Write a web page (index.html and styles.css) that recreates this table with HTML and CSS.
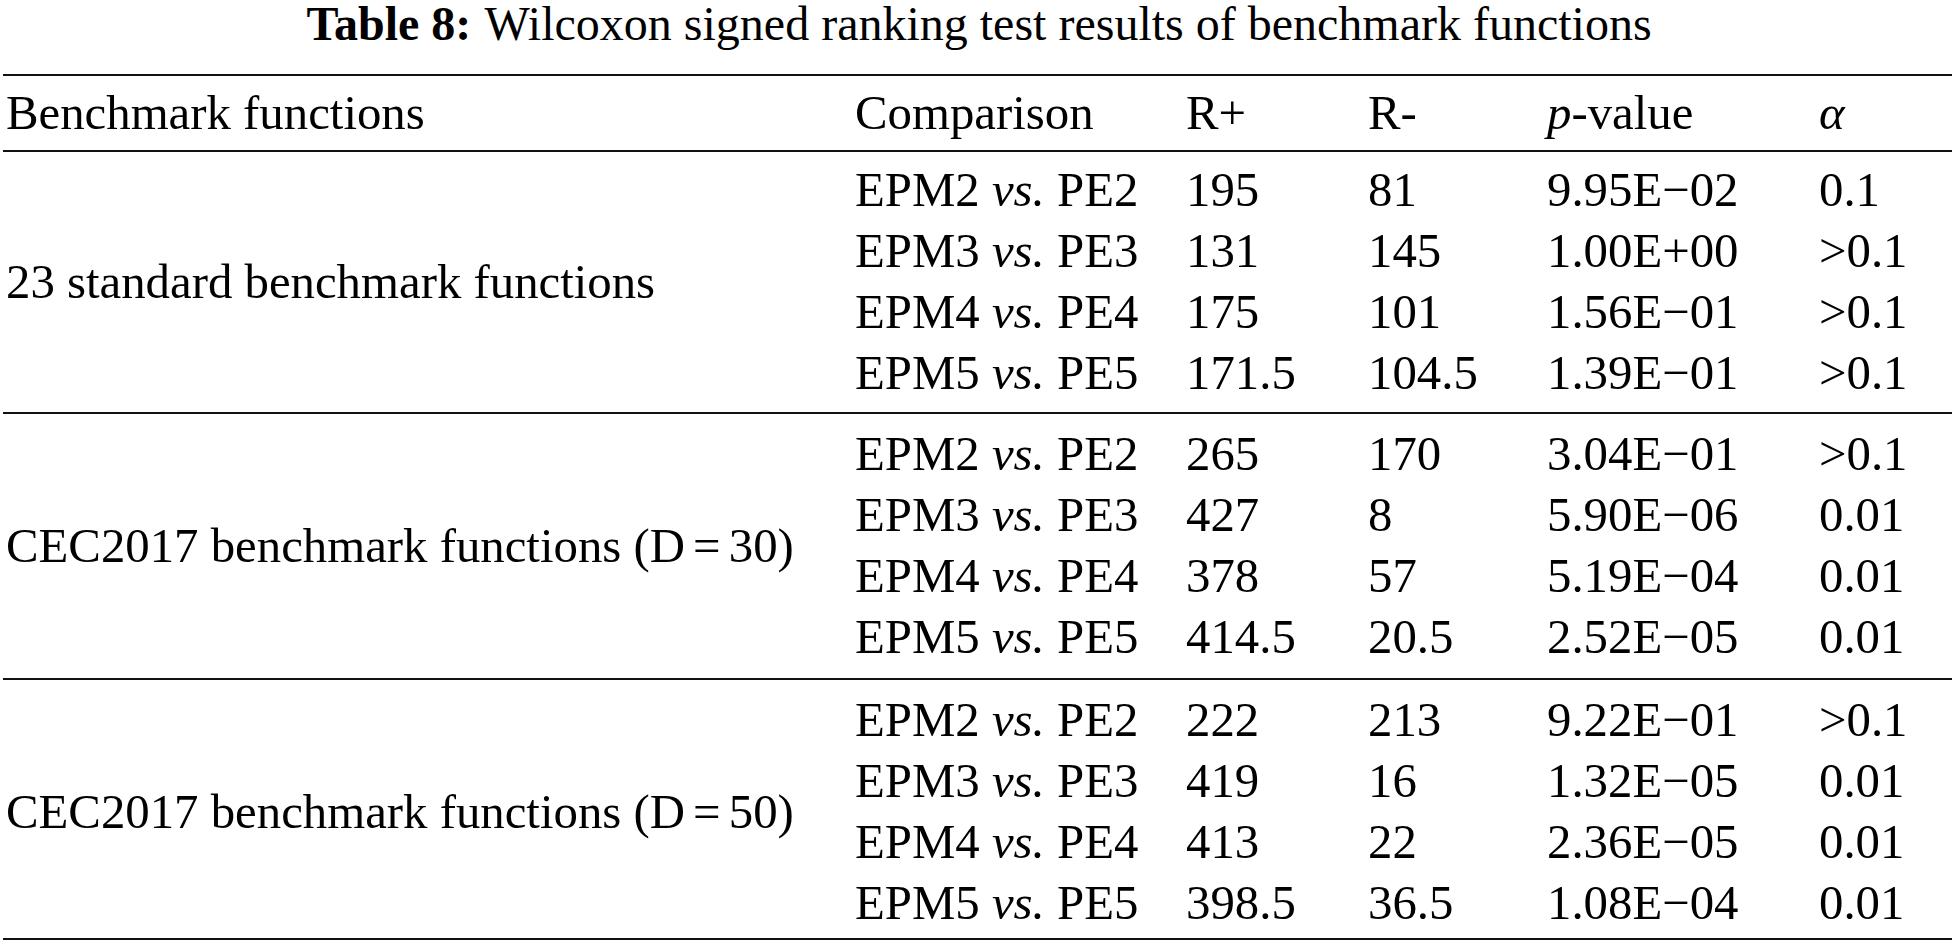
FILE: index.html
```html
<!DOCTYPE html>
<html lang="en">
<head>
<meta charset="utf-8">
<title>Table 8</title>
<link rel="stylesheet" href="styles.css">
</head>
<body>
<div class="page">
  <div class="title"><b>Table 8:</b> Wilcoxon signed ranking test results of benchmark functions</div>
  <table class="results">
    <colgroup>
      <col class="c-bench">
      <col class="c-comp">
      <col class="c-rplus">
      <col class="c-rminus">
      <col class="c-p">
      <col class="c-alpha">
    </colgroup>
    <thead>
      <tr>
        <th>Benchmark functions</th>
        <th>Comparison</th>
        <th>R+</th>
        <th>R-</th>
        <th><i>p</i>-value</th>
        <th><i>α</i></th>
      </tr>
    </thead>
    <tbody class="g1">
      <tr class="first">
        <td rowspan="4" class="group">23 standard benchmark functions</td>
        <td>EPM2 <i>vs.</i> PE2</td><td>195</td><td>81</td><td>9.95E−02</td><td>0.1</td>
      </tr>
      <tr><td>EPM3 <i>vs.</i> PE3</td><td>131</td><td>145</td><td>1.00E+00</td><td>&gt;0.1</td></tr>
      <tr><td>EPM4 <i>vs.</i> PE4</td><td>175</td><td>101</td><td>1.56E−01</td><td>&gt;0.1</td></tr>
      <tr class="last"><td>EPM5 <i>vs.</i> PE5</td><td>171.5</td><td>104.5</td><td>1.39E−01</td><td>&gt;0.1</td></tr>
    </tbody>
    <tbody class="g2">
      <tr class="first">
        <td rowspan="4" class="group">CEC2017 benchmark functions (D&#8198;=&#8198;30)</td>
        <td>EPM2 <i>vs.</i> PE2</td><td>265</td><td>170</td><td>3.04E−01</td><td>&gt;0.1</td>
      </tr>
      <tr><td>EPM3 <i>vs.</i> PE3</td><td>427</td><td>8</td><td>5.90E−06</td><td>0.01</td></tr>
      <tr><td>EPM4 <i>vs.</i> PE4</td><td>378</td><td>57</td><td>5.19E−04</td><td>0.01</td></tr>
      <tr class="last"><td>EPM5 <i>vs.</i> PE5</td><td>414.5</td><td>20.5</td><td>2.52E−05</td><td>0.01</td></tr>
    </tbody>
    <tbody class="g3">
      <tr class="first">
        <td rowspan="4" class="group">CEC2017 benchmark functions (D&#8198;=&#8198;50)</td>
        <td>EPM2 <i>vs.</i> PE2</td><td>222</td><td>213</td><td>9.22E−01</td><td>&gt;0.1</td>
      </tr>
      <tr><td>EPM3 <i>vs.</i> PE3</td><td>419</td><td>16</td><td>1.32E−05</td><td>0.01</td></tr>
      <tr><td>EPM4 <i>vs.</i> PE4</td><td>413</td><td>22</td><td>2.36E−05</td><td>0.01</td></tr>
      <tr class="last"><td>EPM5 <i>vs.</i> PE5</td><td>398.5</td><td>36.5</td><td>1.08E−04</td><td>0.01</td></tr>
    </tbody>
  </table>
</div>
</body>
</html>
```

FILE: styles.css
```css
html, body {
  margin: 0;
  padding: 0;
  background: #ffffff;
}

body {
  font-family: "Liberation Serif", "Times New Roman", serif;
  font-size: 48px;
  color: #000000;
}

.page {
  width: 1958px;
}

.title {
  height: 74px;
  line-height: 48px;
  text-align: center;
  white-space: nowrap;
}

.title b {
  font-weight: bold;
  margin-right: 2px;
}

.results {
  margin-left: 3px;
  width: 1949px;
  table-layout: fixed;
  border-collapse: collapse;
  border-top: 2px solid #111111;
  border-bottom: 2px solid #111111;
  font-size: 48.8px;
}

.c-bench { width: 852px; }
.c-comp { width: 331px; }
.c-rplus { width: 182px; }
.c-rminus { width: 179px; }
.c-p { width: 272px; }
.c-alpha { width: 133px; }

.results th,
.results td {
  padding: 0;
  text-align: left;
  font-weight: normal;
  white-space: nowrap;
  vertical-align: middle;
}

.results th:first-child,
.results td.group {
  padding-left: 3px;
}

.results thead th {
  line-height: 74px;
  border-bottom: 2px solid #111111;
}

.results tbody td {
  line-height: 61px;
}

.results tbody + tbody {
  border-top: 2px solid #111111;
}

/* group 1: 8 + 4×61 + 8 */
.g1 tr.first td { padding-top: 8px; }
.g1 tr.last td,
.g1 td.group { padding-bottom: 8px; }

/* group 2: 10 + 4×61 + 10 */
.g2 tr.first td { padding-top: 10px; }
.g2 tr.last td,
.g2 td.group { padding-bottom: 10px; }

/* group 3: 10 + 4×61 + 4 */
.g3 tr.first td { padding-top: 10px; }
.g3 tr.last td,
.g3 td.group { padding-bottom: 4px; }
```
